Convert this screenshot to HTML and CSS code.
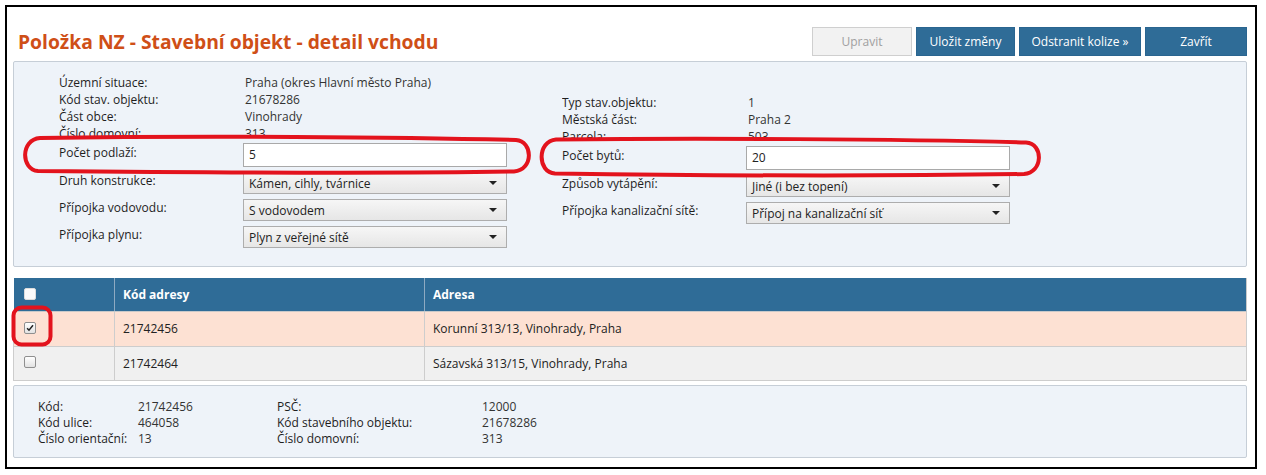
FILE: index.html
```html
<!DOCTYPE html>
<html lang="cs">
<head>
<meta charset="utf-8">
<title>Položka NZ - Stavební objekt - detail vchodu</title>
<link rel="stylesheet" href="styles.css">
</head>
<body>
<div class="frame">
  <div class="topbar">
    <h1 class="title">Položka NZ - Stavební objekt - detail vchodu</h1>
    <div class="actions">
      <button class="btn btn-disabled w-upravit">Upravit</button>
      <button class="btn w-ulozit">Uložit změny</button>
      <button class="btn w-odstranit">Odstranit kolize »</button>
      <button class="btn w-zavrit">Zavřít</button>
    </div>
  </div>

  <div class="panel form-panel">
    <div class="col col-left">
      <div class="info info-left">
        <div class="kv"><span class="k">Územní situace:</span><span class="v">Praha (okres Hlavní město Praha)</span></div>
        <div class="kv"><span class="k">Kód stav. objektu:</span><span class="v">21678286</span></div>
        <div class="kv"><span class="k">Část obce:</span><span class="v">Vinohrady</span></div>
        <div class="kv"><span class="k">Číslo domovní:</span><span class="v">313</span></div>
      </div>
      <div class="field field-input">
        <span class="lbl">Počet podlaží:</span>
        <div class="input">5</div>
      </div>
      <div class="field">
        <span class="lbl">Druh konstrukce:</span>
        <div class="select"><span>Kámen, cihly, tvárnice</span><i class="caret"></i></div>
      </div>
      <div class="field">
        <span class="lbl">Přípojka vodovodu:</span>
        <div class="select"><span>S vodovodem</span><i class="caret"></i></div>
      </div>
      <div class="field">
        <span class="lbl">Přípojka plynu:</span>
        <div class="select"><span>Plyn z veřejné sítě</span><i class="caret"></i></div>
      </div>
    </div>
    <div class="col col-right">
      <div class="info info-right">
        <div class="kv"><span class="k">Typ stav.objektu:</span><span class="v">1</span></div>
        <div class="kv"><span class="k">Městská část:</span><span class="v">Praha 2</span></div>
        <div class="kv"><span class="k">Parcela:</span><span class="v">503</span></div>
      </div>
      <div class="field field-input">
        <span class="lbl">Počet bytů:</span>
        <div class="input">20</div>
      </div>
      <div class="field">
        <span class="lbl">Způsob vytápění:</span>
        <div class="select"><span>Jiné (i bez topení)</span><i class="caret"></i></div>
      </div>
      <div class="field">
        <span class="lbl">Přípojka kanalizační sítě:</span>
        <div class="select"><span>Přípoj na kanalizační síť</span><i class="caret"></i></div>
      </div>
    </div>
  </div>

  <table class="grid">
    <colgroup><col class="c-check"><col class="c-code"><col></colgroup>
    <thead>
      <tr><th><span class="cb cb-head"></span></th><th>Kód adresy</th><th>Adresa</th></tr>
    </thead>
    <tbody>
      <tr class="row-selected">
        <td><span class="cb cb-checked"><svg viewBox="0 0 12 12" class="tick"><path d="M2.5 6.2 L4.8 8.6 L9.6 2.8" /></svg></span></td>
        <td>21742456</td><td>Korunní 313/13, Vinohrady, Praha</td>
      </tr>
      <tr class="row-plain">
        <td><span class="cb"></span></td>
        <td>21742464</td><td>Sázavská 313/15, Vinohrady, Praha</td>
      </tr>
    </tbody>
  </table>

  <div class="panel detail-panel">
    <div class="detail-grid">
      <span class="k">Kód:</span><span class="v">21742456</span><span class="k">PSČ:</span><span class="v">12000</span>
      <span class="k">Kód ulice:</span><span class="v">464058</span><span class="k">Kód stavebního objektu:</span><span class="v">21678286</span>
      <span class="k">Číslo orientační:</span><span class="v">13</span><span class="k">Číslo domovní:</span><span class="v">313</span>
    </div>
  </div>
</div>

<svg class="annot" viewBox="0 0 1266 475" width="1266" height="475">
  <path d="M40 138 C 200 135.5, 400 137, 516 140 C 533 141, 534 170, 514 171.5 C 400 173.5, 200 172.5, 38 171 C 21 170, 20 139.5, 40 138 Z"/>
  <path d="M556 139.5 C 700 138, 900 139, 1026 142.5 C 1044 143.5, 1043 173, 1024 174 C 900 176, 700 175.5, 555 173.5 C 537 172.5, 537 141, 556 139.5 Z"/>
  <rect x="13.5" y="307.5" width="37" height="37" rx="8" ry="8"/>
</svg>
</body>
</html>
```

FILE: styles.css
```css
* { box-sizing: border-box; }

html, body {
  margin: 0;
  padding: 0;
  background: #ffffff;
}

body {
  font-family: "Segoe UI", "Open Sans", "Noto Sans", sans-serif;
  font-size: 12px;
  color: #222;
  width: 1266px;
  height: 475px;
  position: relative;
  overflow: hidden;
}

.frame {
  margin: 5px 0 0 5px;
  width: 1252px;
  height: 464px;
  border: 2px solid #000;
  padding: 0 8px 0 6px;
}

/* ---------- top bar ---------- */
.topbar {
  display: flex;
  align-items: center;
  justify-content: space-between;
  padding-top: 20px;
  height: 49px;
}

.title {
  margin: 0 0 0 5px;
  font-size: 19.3px;
  font-weight: 700;
  color: #cf4f17;
  line-height: 29px;
}

.actions {
  display: flex;
  gap: 4px;
}

.btn {
  height: 29px;
  border: 1px solid #2a6590;
  background: #2f6c97;
  color: #fff;
  font-family: inherit;
  font-size: 12px;
  padding: 0;
  border-radius: 0;
}

.btn-disabled {
  background: #f2f2f2;
  border-color: #cfcfcf;
  color: #a0a0a0;
}

.w-upravit { width: 100px; }
.w-ulozit { width: 99px; }
.w-odstranit { width: 122px; }
.w-zavrit { width: 102px; }

/* ---------- panels ---------- */
.panel {
  background: #eef3f9;
  border: 1px solid #c6ced7;
  border-radius: 2px;
}

.form-panel {
  margin-top: 5px;
  height: 206px;
  display: grid;
  grid-template-columns: 503px 1fr;
  padding-left: 45px;
}

.col-left { padding-top: 12px; }
.col-right { padding-top: 32px; }

.info {
  overflow: hidden;
}
.info-left { height: 63px; }
.info-right { height: 44px; }

.kv {
  display: grid;
  grid-template-columns: 186px 1fr;
  line-height: 17px;
  height: 17px;
}

.k { color: #1e1e1e; }
.v { color: #333; }

.field {
  display: grid;
  grid-template-columns: 184px 264px;
  align-items: start;
  margin-top: 5px;
}

.field-input { margin-top: 6px; }
.col-right .field-input { margin-top: 8px; }

.lbl {
  line-height: 17px;
  color: #1e1e1e;
}

.field-input .lbl { padding-top: 1px; }

.input {
  height: 24px;
  background: #fff;
  border: 1px solid #a9a9a9;
  padding-left: 5px;
  line-height: 22px;
  color: #222;
}

.select {
  height: 22px;
  border: 1px solid #adadad;
  background: linear-gradient(#f6f6f6, #e6e6e6);
  padding: 0 9px 0 5px;
  display: flex;
  align-items: center;
  justify-content: space-between;
  color: #222;
}

.caret {
  width: 0;
  height: 0;
  border-left: 4px solid transparent;
  border-right: 4px solid transparent;
  border-top: 4px solid #222;
}

/* ---------- table ---------- */
.grid {
  margin-top: 11px;
  width: 1234px;
  border-collapse: collapse;
  table-layout: fixed;
}

.c-check { width: 101px; }
.c-code { width: 310px; }

.grid th {
  background: #2f6c97;
  color: #fff;
  font-weight: 700;
  text-align: left;
  height: 33px;
  padding: 0 0 0 8px;
  border-right: 1px solid #8eaac2;
  border-bottom: 1px solid #c9c9c9;
}

.grid th:first-child,
.grid td:first-child {
  padding-left: 10px;
}

.grid th:last-child { border-right: 1px solid #c9c9c9; }

.grid td {
  height: 34px;
  padding: 0 0 0 8px;
  border: 1px solid #cdcdcd;
  color: #222;
}

.row-selected td { background: #fde1d3; height: 35px; }
.row-plain td { background: #f0f0f0; }

.cb {
  display: inline-block;
  width: 12px;
  height: 12px;
  border: 1px solid #8f8f8f;
  border-radius: 2px;
  background: linear-gradient(#ffffff, #e2e2e2);
  vertical-align: middle;
  position: relative;
  top: -2px;
}

.cb-head {
  background: #fbfbfb;
  border-color: #dcdcdc;
}

.tick {
  display: block;
  width: 10px;
  height: 10px;
}
.tick path {
  fill: none;
  stroke: #222;
  stroke-width: 1.8;
}

/* ---------- detail panel ---------- */
.detail-panel {
  margin-top: 4px;
  height: 73px;
  padding: 13px 0 0 24px;
}

.detail-grid {
  display: grid;
  grid-template-columns: 100px 139px 205px 1fr;
  line-height: 16px;
}

/* ---------- annotations ---------- */
.annot {
  position: absolute;
  left: 0;
  top: 0;
  pointer-events: none;
}
.annot path, .annot rect {
  fill: none;
  stroke: #e3131d;
  stroke-width: 4;
  stroke-linejoin: round;
}
```
